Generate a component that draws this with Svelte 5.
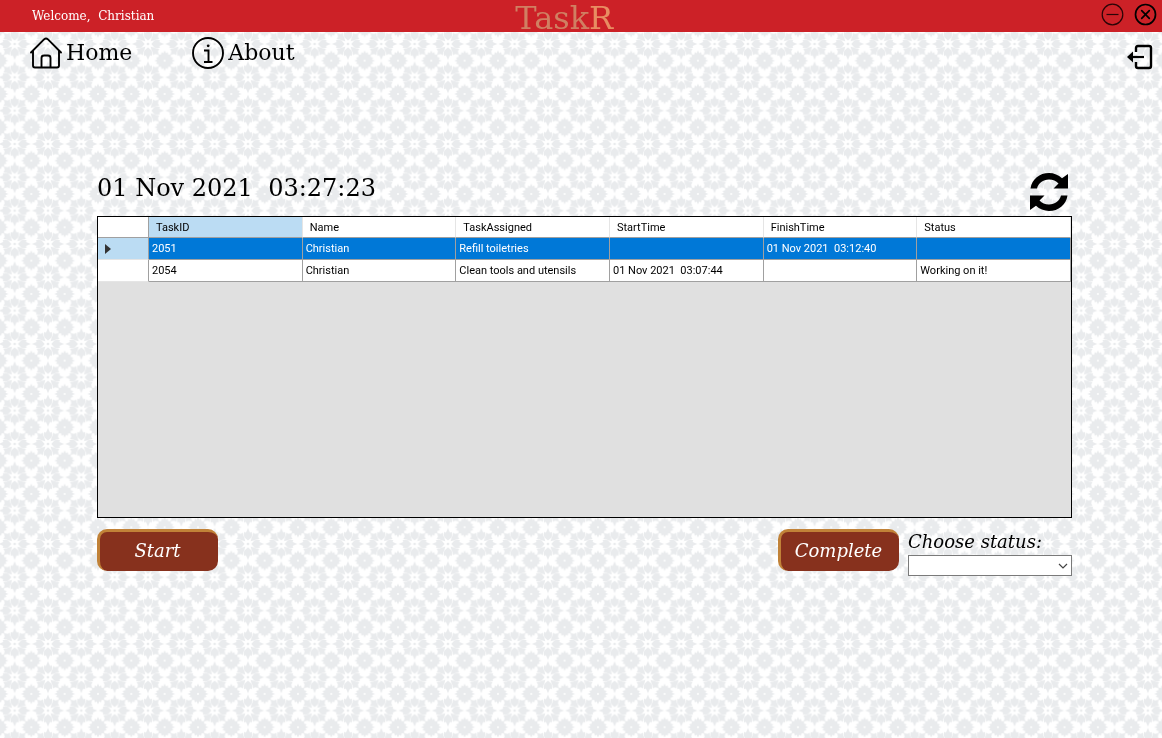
<script>
  let selectedId = $state(2051);
  let status = $state('');

  const user = 'Christian';
  const now = '01 Nov 2021  03:27:23';

  const columns = [
    { key: 'id', label: 'TaskID' },
    { key: 'name', label: 'Name' },
    { key: 'task', label: 'TaskAssigned' },
    { key: 'start', label: 'StartTime' },
    { key: 'finish', label: 'FinishTime' },
    { key: 'status', label: 'Status' }
  ];

  const tasks = [
    { id: 2051, name: 'Christian', task: 'Refill toiletries', start: '', finish: '01 Nov 2021  03:12:40', status: '' },
    { id: 2054, name: 'Christian', task: 'Clean tools and utensils', start: '01 Nov 2021  03:07:44', finish: '', status: 'Working on it!' }
  ];
</script>

<svg class="wallpaper" aria-hidden="true">
  <defs>
    <!-- one petal pair is drawn once and turned round the centre -->
    <g id="petals">
      <path d="M0-10 L-10-19 L-13-27 L-11-36 L-6-34 L0-48 L6-34 L11-36 L13-27 L10-19 Z" />
      <path d="M8-8 L11-19 L15-27 L15-34 L21-30 L32-32 L30-21 L34-15 L27-15 L19-11 Z" />
    </g>
    <g id="flower">
      <use href="#petals" />
      <use href="#petals" transform="rotate(90)" />
      <use href="#petals" transform="rotate(180)" />
      <use href="#petals" transform="rotate(270)" />
      <circle r="4" />
    </g>
    <path
      id="star"
      d="M0-31 L4-22 L9-26 L11-18 L19-19 L18-11 L26-9 L22-4 L31 0 L22 4 L26 9 L18 11 L19 19 L11 18 L9 26 L4 22 L0 31 L-4 22 L-9 26 L-11 18 L-19 19 L-18 11 L-26 9 L-22 4 L-31 0 L-22-4 L-26-9 L-18-11 L-19-19 L-11-18 L-9-26 L-4-22 Z"
    />
    <pattern id="floral" width="100" height="100" patternUnits="userSpaceOnUse" patternTransform="translate(-2 -6) scale(0.3333)">
      <rect width="100" height="100" fill="#fff" />
      <g fill="#e9ebed">
        <use href="#flower" x="50" y="50" />
        <use href="#star" x="0" y="0" />
        <use href="#star" x="100" y="0" />
        <use href="#star" x="0" y="100" />
        <use href="#star" x="100" y="100" />
      </g>
      <g fill="#fff">
        <circle r="3" />
        <circle cx="100" r="3" />
        <circle cy="100" r="3" />
        <circle cx="100" cy="100" r="3" />
      </g>
    </pattern>
  </defs>
  <rect width="100%" height="100%" fill="url(#floral)" />
</svg>

<header class="titlebar">
  <span class="welcome">Welcome,  {user}</span>
  <span class="brand">Task<span class="brand-r">R</span></span>
  <div class="window-actions">
    <button class="icon-btn" aria-label="Minimize">
      <svg width="23" height="23" viewBox="0 0 23 23" fill="none" stroke="#2a0507" stroke-width="1.2">
        <circle cx="11.5" cy="11.5" r="10.3" />
        <path d="M5.5 11.5h12" />
      </svg>
    </button>
    <button class="icon-btn" aria-label="Close">
      <svg width="23" height="23" viewBox="0 0 23 23" fill="none" stroke="#000" stroke-width="1.7" stroke-linecap="round">
        <circle cx="11.5" cy="11.5" r="10" />
        <path d="M7.7 7.7l7.6 7.6M15.3 7.7l-7.6 7.6" />
      </svg>
    </button>
  </div>
</header>

<nav class="menu">
  <a href="#home">
    <svg width="32" height="32" viewBox="0 0 32 32" fill="none" stroke="#000" stroke-width="1.9" stroke-linecap="round" stroke-linejoin="round">
      <path d="M1 15.5L14 2.4q2-1.7 4 0L31 15.5" />
      <path d="M3 14v14.5q0 2 2 2h22q2 0 2-2V14" />
      <path d="M11.5 30V21q0-2.500 2.500-2.500h4q2.500 0 2.500 2.500v9" />
    </svg>
    Home
  </a>
  <a href="#about">
    <svg width="32" height="32" viewBox="0 0 32 32" fill="none" stroke="#000" stroke-width="1.9">
      <circle cx="16" cy="16" r="15" />
      <path d="M12 13.500h4.500V25M12 25h8.500" />
      <circle cx="16.200" cy="8.800" r="1.400" fill="#000" stroke="none" />
    </svg>
    About
  </a>
  <button class="icon-btn logout" aria-label="Log out">
    <svg width="26" height="26" viewBox="0 0 26 26" fill="none" stroke="#000" stroke-width="2.4">
      <path d="M9 8V4q0-2 2-2H22q2 0 2 2v18q0 2-2 2H11q-2 0-2-2v-4" />
      <path d="M5 13h12" stroke-width="2.200" />
      <path d="M0 13l6-5.500v11z" fill="#000" stroke="none" />
    </svg>
  </button>
</nav>

<main>
  <div class="toolbar">
    <time>{now}</time>
    <button class="icon-btn" aria-label="Refresh">
      <svg width="40" height="40" viewBox="0 0 40 40">
        <path d="M1.500 16.500C3 7 10.500 1 20 1c5 0 9.500 2 13 5.200L39 2v14.500H24.500l5-5C27 9 24 7.500 20 7.500c-6 0-10.500 3.500-12 9z" />
        <path d="M38.500 23.500C37 33 29.500 39 20 39c-5 0-9.500-2-13-5.200L1 38V23.500h14.500l-5 5C13 31 16 32.500 20 32.500c6 0 10.500-3.500 12-9z" />
      </svg>
    </button>
  </div>

  <div class="grid">
    <table>
      <thead>
        <tr>
          <th class="marker"></th>
          {#each columns as col (col.key)}
            <th class:current={col.key === 'id'}>{col.label}</th>
          {/each}
        </tr>
      </thead>
      <tbody>
        {#each tasks as task (task.id)}
          <tr class:selected={task.id === selectedId} onclick={() => (selectedId = task.id)}>
            <td class="marker">
              {#if task.id === selectedId}
                <svg width="6" height="10" viewBox="0 0 6 10"><path d="M0 0l6 5-6 5z" fill="#333" /></svg>
              {/if}
            </td>
            {#each columns as col (col.key)}
              <td>{task[col.key]}</td>
            {/each}
          </tr>
        {/each}
      </tbody>
    </table>
  </div>

  <div class="actions">
    <button class="action-btn">Start</button>
    <button class="action-btn complete">Complete</button>
    <div class="field">
      <label for="status">Choose status:</label>
      <div class="select">
        <select id="status" bind:value={status}>
          <option value=""></option>
          <option>Working on it!</option>
        </select>
        <svg width="10" height="6" viewBox="0 0 10 6" fill="none" stroke="#444" stroke-width="1.2"><path d="M1 1l4 4 4-4" /></svg>
      </div>
    </div>
  </div>
</main>

<style>
  :global(body) {
    font-family: Rockwell, "DejaVu Serif", serif;
    color: #000;
  }

  .wallpaper {
    position: fixed;
    inset: 0;
    width: 100%;
    height: 100%;
    z-index: -1;
  }

  .icon-btn {
    display: block;
    padding: 0;
    border: none;
    background: none;
    cursor: pointer;
  }

  .icon-btn svg {
    display: block;
  }

  .titlebar {
    display: grid;
    grid-template: 32px / 8fr auto 9fr;
    align-items: center;
    padding: 0 5px 0 32px;
    background: #cc2127;
  }

  .welcome {
    color: #fff;
    font-size: 12px;
    line-height: 32px;
    white-space: pre;
  }

  .brand {
    align-self: start;
    color: #d07f62;
    font-size: 32px;
    line-height: 36px;
  }

  .brand-r {
    color: #e88d62;
  }

  .window-actions {
    display: flex;
    justify-content: flex-end;
    gap: 10px;
    padding-bottom: 4px;
  }

  .menu {
    display: flex;
    align-items: center;
    gap: 60px;
    padding: 4px 9px 0 30px;
  }

  .menu a {
    display: flex;
    align-items: center;
    gap: 4px;
    color: #000;
    font-size: 22px;
    line-height: 32px;
    text-decoration: none;
  }

  .logout {
    margin: 8px 0 0 auto;
  }

  main {
    padding: 102px 90px 0 97px;
  }

  .toolbar {
    display: flex;
    justify-content: space-between;
    padding: 0 3px 4px 0;
  }

  time {
    font-size: 24px;
    line-height: 32px;
    white-space: pre;
  }

  .grid {
    min-height: 300px;
    border: 1px solid #000;
    background: #e0e0e0;
  }

  table {
    width: 100%;
    table-layout: fixed;
    border-spacing: 0;
    font-family: Roboto, "Liberation Sans", sans-serif;
    font-size: 11px;
    line-height: 13px;
    text-align: left;
  }

  th,
  td {
    box-sizing: border-box;
    height: 22px;
    padding: 0 3px;
    border-right: 1px solid #a0a0a0;
    border-bottom: 1px solid #a0a0a0;
    background: #fff;
    white-space: pre;
  }

  th {
    height: 21px;
    padding: 0 7px;
    border-right-color: #e5e5e5;
    font-weight: 400;
  }

  .marker {
    width: 51px;
    padding: 0 7px;
    border-right-color: #a0a0a0;
  }

  td.marker {
    border-bottom-color: #e5e5e5;
  }

  .marker svg {
    display: block;
  }

  th.current,
  .selected .marker {
    background: #bbdcf3;
  }

  .selected td:not(.marker) {
    background: #0078d7;
    color: #fff;
  }

  .actions {
    display: flex;
    align-items: flex-start;
    gap: 9px;
    padding-top: 11px;
  }

  .action-btn {
    width: 121px;
    height: 42px;
    padding: 0 3px 2px 0;
    border: 0 solid #c18238;
    border-width: 3px 0 0 3px;
    border-radius: 10px;
    background: #87311d;
    color: #fff;
    font: italic 18px Rockwell, "DejaVu Serif", serif;
    cursor: pointer;
  }

  .complete {
    margin-left: auto;
  }

  .field {
    width: 164px;
  }

  label {
    display: block;
    font-size: 18px;
    font-style: italic;
    line-height: 26px;
    white-space: nowrap;
  }

  .select {
    position: relative;
  }

  .select svg {
    position: absolute;
    top: 8px;
    right: 4px;
    pointer-events: none;
  }

  select {
    display: block;
    appearance: none;
    width: 100%;
    height: 21px;
    padding: 0 20px 0 3px;
    border: 1px solid #7a7a7a;
    border-radius: 0;
    background: #fff;
    font-size: 12px;
  }
</style>
